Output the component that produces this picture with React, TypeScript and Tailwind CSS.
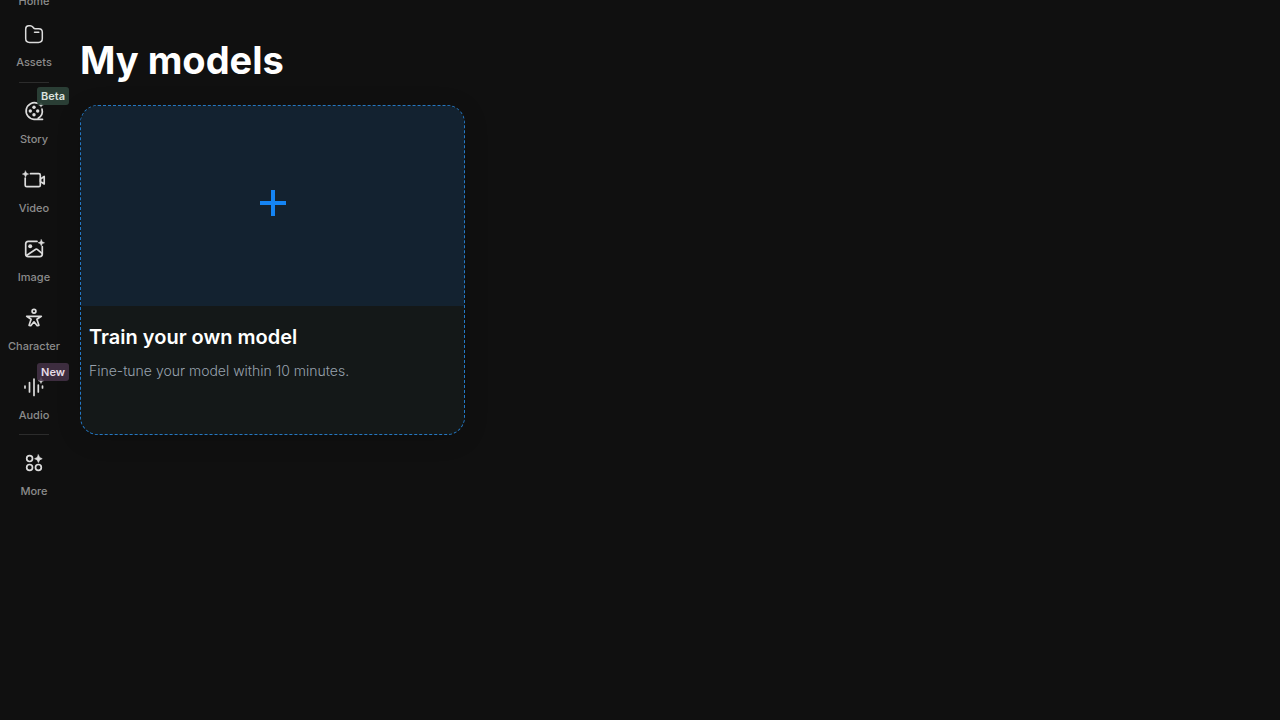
import React from 'react';

type IconProps = { children: React.ReactNode };

function Icon({ children }: IconProps) {
    return (
        <svg
            className="w-6 h-6"
            viewBox="0 0 24 24"
            fill="none"
            stroke="currentColor"
            strokeWidth="1.7"
            strokeLinecap="round"
            strokeLinejoin="round"
            aria-hidden="true"
        >
            {children}
        </svg>
    );
}

const HomeIcon = () => (
    <Icon>
        <path d="M4 10.5 12 4l8 6.5V18a2 2 0 0 1-2 2H6a2 2 0 0 1-2-2z" />
        <path d="M12 16v-3" />
    </Icon>
);

const AssetsIcon = () => (
    <Icon>
        <path d="M3.7 7c0-2.200.9-3.300 3-3.300h1.600c1.200 0 1.800.4 2.500 1.300l.6.8c.5.7 1 .9 1.900.9h3.500c2.400 0 3.500 1.100 3.500 3.500v6.400c0 2.700-1.200 3.900-3.900 3.900H7.600c-2.700 0-3.900-1.200-3.900-3.900z" strokeWidth="1.5" />
        <path d="M12.500 10.300h4.300" strokeWidth="1.5" />
    </Icon>
);

const StoryIcon = () => (
    <Icon>
        <path d="M15.500 4.300A8.300 8.300 0 1 0 12 20.300h8.500" />
        <path d="M20 10A8.300 8.300 0 0 1 16.200 19.200" />
        <g fill="currentColor" stroke="none">
            <circle cx="12" cy="8.300" r="1.700" />
            <circle cx="8.300" cy="12" r="1.700" />
            <circle cx="15.700" cy="12" r="1.700" />
            <circle cx="12" cy="15.700" r="1.700" />
            <path d="m19 3.200.8 2 2 .8-2 .8-.8 2-.8-2-2-.8 2-.8z" />
        </g>
    </Icon>
);

const VideoIcon = () => (
    <Icon>
        <path d="M8.500 5.700h8.300c1 0 1.500.5 1.500 1.500v10c0 1-.5 1.500-1.500 1.500H4.700c-1 0-1.500-.5-1.500-1.500V10" />
        <path d="m18.500 11 3.700-2.500v7.500l-3.700-2.500z" />
        <path d="m3.500 2.900 1 2.200 2.200 1-2.200 1-1 2.200-1-2.200-2.200-1 2.200-1z" fill="currentColor" strokeWidth="0.4" />
    </Icon>
);

const ImageIcon = () => (
    <Icon>
        <path d="M15 4.400H6.200c-1.700 0-2.500.8-2.500 2.500v10.200c0 1.700.8 2.500 2.500 2.500h11.600c1.700 0 2.500-.8 2.500-2.500V9.500" />
        <path d="m4.500 18.500 9.300-6.200c.5-.3.900-.3 1.400.1l4.800 4" />
        <circle cx="8.200" cy="9.200" r="2" fill="currentColor" stroke="none" />
        <path d="m19.300 2.500 1 2.300 2.300 1-2.300 1-1 2.300-1-2.300-2.300-1 2.300-1z" fill="currentColor" strokeWidth="0.4" />
    </Icon>
);

const CharacterIcon = () => (
    <Icon>
        <circle cx="12" cy="5.200" r="1.900" />
        <path d="M4.700 10.300h14.600l-4.400 3 2 6-1.700.4L12 15.800l-3.200 3.900-1.700-.4 2-6z" />
    </Icon>
);

const AudioIcon = () => (
    <Icon>
        <path d="M3 11v2M7.500 7.500v9.500M12 4v16.500M16.300 10v7M20.500 11v2" />
        <path d="m19 2.600.9 2.100 2.100.9-2.100.9-.9 2.100-.9-2.100-2.100-.9 2.100-.9z" fill="currentColor" strokeWidth="0.4" />
    </Icon>
);

const MoreIcon = () => (
    <Icon>
        <circle cx="7.600" cy="7.600" r="2.900" />
        <circle cx="7.600" cy="16.400" r="2.900" />
        <circle cx="16.400" cy="16.400" r="2.900" />
        <path d="m16.400 3.900 1.200 2.600 2.600 1.200-2.600 1.200-1.200 2.600-1.200-2.600-2.600-1.200 2.600-1.200z" fill="currentColor" strokeWidth="0.7" />
    </Icon>
);

const createItems = [
    { label: 'Story', icon: StoryIcon, badge: 'Beta', badgeClass: 'bg-[#2f463c]/85 text-[#dce3df]' },
    { label: 'Video', icon: VideoIcon },
    { label: 'Image', icon: ImageIcon },
    { label: 'Character', icon: CharacterIcon },
    { label: 'Audio', icon: AudioIcon, badge: 'New', badgeClass: 'bg-[#453248]/85 text-[#e6dce7]' },
];

type NavItemProps = {
    label: string;
    icon: React.ComponentType;
    badge?: string;
    badgeClass?: string;
};

function NavItem({ label, icon: ItemIcon, badge, badgeClass = '' }: NavItemProps) {
    return (
        <a href="#" className="relative flex w-full flex-col items-center gap-2 text-[#dcdcdc]">
            <ItemIcon />
            <span className="text-[11px] leading-4 font-medium text-[#8c8c8c]">{label}</span>
            {badge && (
                <span className={`absolute -top-3 left-[37px] w-8 rounded-[3px] text-center text-[11px] leading-[18px] font-semibold ${badgeClass}`}>
                    {badge}
                </span>
            )}
        </a>
    );
}

function Divider() {
    return <div className="mb-4 h-px w-[30px] shrink-0 bg-[#2c2c2c]" />;
}

function Sidebar() {
    return (
        <nav className="flex w-[68px] shrink-0 flex-col items-center">
            {/* Home sits mostly above the fold, the rail is scrolled down */}
            <div className="-mt-[39px] mb-3 flex w-full flex-col gap-[13px]">
                <NavItem label="Home" icon={HomeIcon} />
                <NavItem label="Assets" icon={AssetsIcon} />
            </div>
            <Divider />
            <div className="mb-[11px] flex w-full flex-col gap-[21px]">
                {createItems.map((item) => (
                    <NavItem key={item.label} {...item} />
                ))}
            </div>
            <Divider />
            <NavItem label="More" icon={MoreIcon} />
        </nav>
    );
}

function TrainCard() {
    return (
        <button
            type="button"
            className="flex flex-col overflow-hidden rounded-[18px] border border-dashed border-[#2478c4] bg-[#141818] text-left shadow-[0_4px_24px_rgba(0,0,0,0.15)]"
        >
            <span className="flex h-[200px] w-full justify-center bg-[#132230] pt-[83px]">
                <svg className="h-7 w-7" viewBox="0 0 28 28" fill="none" stroke="#1484f4" strokeWidth="4" strokeLinecap="butt" aria-hidden="true">
                    <path d="M14 1v26M1 14h26" />
                </svg>
            </span>
            <span className="flex h-32 flex-col gap-2 px-2 pt-4">
                <span className="text-xl leading-[30px] font-semibold text-white">Train your own model</span>
                <span className="text-sm leading-[22px] font-light text-[#98a2ae]">Fine-tune your model within 10 minutes.</span>
            </span>
        </button>
    );
}

export default function App() {
    return (
        <div className="flex min-h-screen overflow-hidden bg-[#101010] font-[Inter,sans-serif]">
            <Sidebar />
            <main className="min-w-0 flex-1 pt-9 pr-[13px] pl-3">
                <h1 className="text-[38px] leading-[49px] font-bold text-white">My models</h1>
                <div className="mt-5 grid grid-cols-3 gap-4">
                    <TrainCard />
                </div>
            </main>
        </div>
    );
}
